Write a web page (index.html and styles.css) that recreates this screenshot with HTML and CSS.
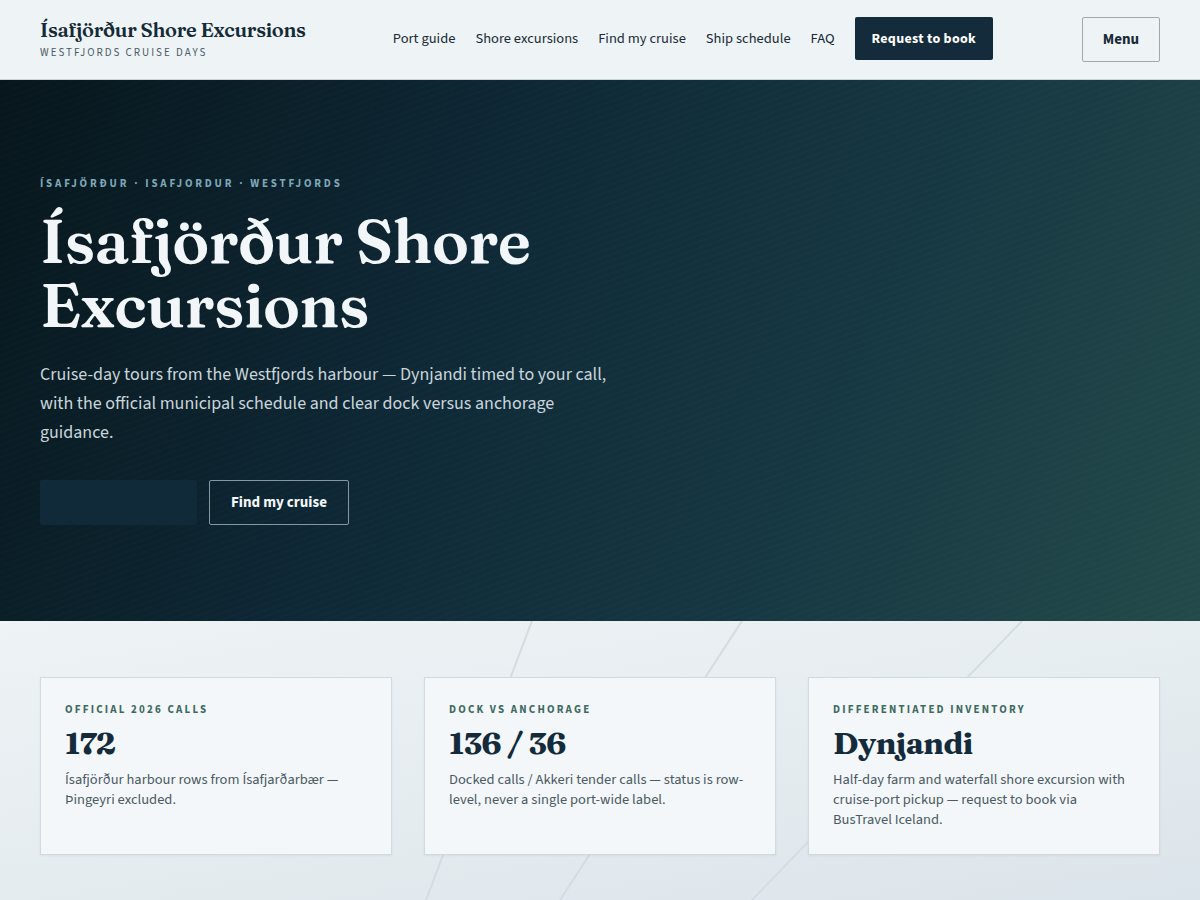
FILE: index.html
```html
<!DOCTYPE html>
<html lang="en">
<head>
  <meta charset="utf-8">
  <title>Ísafjörður Shore Excursions</title>
  <link rel="stylesheet" href="styles.css">
</head>
<body>
  <header class="site-header">
    <div class="brand">
      <a href="#" class="brand-name">Ísafjörður Shore Excursions</a>
      <span class="brand-tag">Westfjords cruise days</span>
    </div>
    <nav class="main-nav">
      <a href="#">Port guide</a>
      <a href="#">Shore excursions</a>
      <a href="#">Find my cruise</a>
      <a href="#">Ship schedule</a>
      <a href="#">FAQ</a>
      <a href="#" class="btn btn-dark">Request to book</a>
    </nav>
    <button class="menu-button">Menu</button>
  </header>

  <section class="hero">
    <p class="eyebrow">Ísafjörður · Isafjordur · Westfjords</p>
    <h1>Ísafjörður Shore Excursions</h1>
    <p class="lead">Cruise-day tours from the Westfjords harbour — Dynjandi timed to your call, with the official municipal schedule and clear dock versus anchorage guidance.</p>
    <div class="hero-actions">
      <a href="#" class="btn btn-fill"></a>
      <a href="#" class="btn btn-outline">Find my cruise</a>
    </div>
  </section>

  <section class="facts">
    <!-- faint diagonal strokes behind the cards -->
    <svg class="facts-lines" viewBox="0 0 1200 279" preserveAspectRatio="none" aria-hidden="true">
      <line x1="532" y1="0" x2="426" y2="279"/>
      <line x1="742" y1="0" x2="560" y2="279"/>
      <line x1="1022" y1="0" x2="752" y2="279"/>
    </svg>
    <div class="fact-grid">
      <div class="fact-card">
        <p class="fact-label">Official 2026 calls</p>
        <p class="fact-value">172</p>
        <p class="fact-text">Ísafjörður harbour rows from Ísafjarðarbær — Þingeyri excluded.</p>
      </div>
      <div class="fact-card">
        <p class="fact-label">Dock vs anchorage</p>
        <p class="fact-value">136 / 36</p>
        <p class="fact-text">Docked calls / Akkeri tender calls — status is row-level, never a single port-wide label.</p>
      </div>
      <div class="fact-card">
        <p class="fact-label">Differentiated inventory</p>
        <p class="fact-value">Dynjandi</p>
        <p class="fact-text">Half-day farm and waterfall shore excursion with cruise-port pickup — request to book via BusTravel Iceland.</p>
      </div>
    </div>
  </section>
</body>
</html>
```

FILE: styles.css
```css
/* base */
* {
  box-sizing: border-box;
}

body {
  margin: 0;
  font-family: "Source Sans 3", "Source Sans Pro", "Noto Sans", sans-serif;
  color: #142833;
  background-color: #e9eff2;
}

a {
  color: inherit;
  text-decoration: none;
}

p {
  margin: 0;
}

/* header */
.site-header {
  display: flex;
  align-items: center;
  height: 80px;
  padding: 0 40px;
  background-color: #eef3f5;
  border-bottom: 1px solid #c9d3d8;
}

.brand {
  display: flex;
  flex-direction: column;
  margin-top: -2px;
}

.brand-name {
  font-family: "Fraunces", serif;
  font-weight: 600;
  font-size: 20px;
  letter-spacing: -0.3px;
  color: #142a36;
  line-height: 26px;
}

.brand-tag {
  margin-top: 2px;
  font-size: 11px;
  letter-spacing: 2px;
  text-transform: uppercase;
  color: #4b5c66;
}

.main-nav {
  display: flex;
  align-items: center;
  gap: 20px;
  margin-left: auto;
  margin-top: -2px;
  font-size: 14.5px;
  color: #172a35;
}

.btn {
  display: inline-flex;
  align-items: center;
  justify-content: center;
  height: 44px;
  padding: 0 17px;
  border-radius: 2px;
  font-weight: 700;
  font-size: 14px;
}

.btn-dark {
  height: 43px;
  padding: 0 17px;
  background-color: #132b3a;
  color: #fff;
  letter-spacing: 0.3px;
}

.menu-button {
  margin-left: 89px;
  width: 78px;
  height: 45px;
  border: 1px solid #9ea9b0;
  border-radius: 2px;
  background: transparent;
  font-family: inherit;
  font-weight: 700;
  font-size: 15px;
  color: #172a35;
}

/* hero */
.hero {
  height: 541px;
  padding: 96px 40px 0;
  color: #f2f6f8;
  background:
    repeating-linear-gradient(160deg, rgba(255, 255, 255, 0.008) 0 2px, rgba(0, 0, 0, 0.014) 2px 6px),
    linear-gradient(115deg, #07161c 0%, #0f2a38 40%, #173a44 70%, #244b4b 100%);
}

.eyebrow {
  font-size: 11px;
  font-weight: 700;
  letter-spacing: 2.8px;
  text-transform: uppercase;
  color: #7ea7b8;
}

.hero h1 {
  margin: 18px 0 0;
  max-width: 600px;
  font-family: "Fraunces", serif;
  font-weight: 600;
  font-size: 62px;
  line-height: 64px;
  letter-spacing: -0.6px;
}

.lead {
  margin-top: 23px;
  max-width: 580px;
  font-size: 18px;
  line-height: 29px;
  color: #c9d5db;
}

.hero-actions {
  display: flex;
  gap: 12px;
  margin-top: 33px;
}

.btn-fill {
  width: 157px;
  height: 45px;
  background-color: #112a3a;
}

.btn-outline {
  height: 45px;
  padding: 0 21px;
  border: 1px solid #8797a0;
  color: #f2f6f8;
  font-size: 15px;
}

/* fact cards */
.facts {
  position: relative;
  height: 279px;
  padding: 56px 40px 0;
  overflow: hidden;
  background: linear-gradient(170deg, #eef3f5 0%, #e4ebef 60%, #dbe4ea 100%);
}

.facts-lines {
  position: absolute;
  left: 0;
  top: 0;
  width: 100%;
  height: 100%;
}

.facts-lines line {
  stroke: #d3dce2;
  stroke-width: 2;
}

.fact-grid {
  position: relative;
  display: grid;
  grid-template-columns: repeat(3, 1fr);
  gap: 32px;
}

.fact-card {
  height: 178px;
  padding: 24px 24px 0;
  background-color: #f3f7f9;
  border: 1px solid #d2dade;
  box-shadow: 0 1px 2px rgba(20, 40, 51, 0.06);
}

.fact-label {
  font-size: 11px;
  font-weight: 700;
  letter-spacing: 2.2px;
  text-transform: uppercase;
  color: #3f6a60;
  line-height: 16px;
}

.fact-value {
  margin-top: 5px;
  font-family: "Fraunces", serif;
  font-weight: 700;
  font-size: 31px;
  line-height: 40px;
  letter-spacing: -0.5px;
  color: #132b3a;
}

.fact-text {
  margin-top: 7px;
  font-size: 14.5px;
  line-height: 20px;
  color: #4b5a63;
}
```
